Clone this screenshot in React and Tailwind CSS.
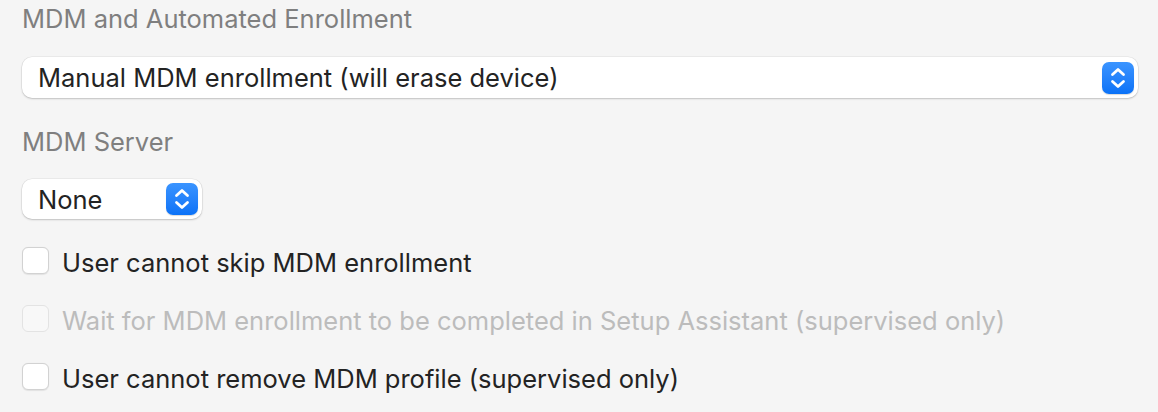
import React from "react";

function Stepper({ className = "" }) {
  return (
    <div
      className={
        "flex items-center justify-center rounded-[7px] bg-gradient-to-b from-[#3a94ff] to-[#0a72f7] shadow-[0_1px_1px_rgba(0,0,0,0.15)] " +
        className
      }
    >
      <svg width="16" height="22" viewBox="0 0 16 22" fill="none">
        <path
          d="M2.5 7.5 L8 2.5 L13.5 7.5"
          stroke="white"
          strokeWidth="2.8"
          strokeLinecap="round"
          strokeLinejoin="round"
        />
        <path
          d="M2.5 14.5 L8 19.5 L13.5 14.5"
          stroke="white"
          strokeWidth="2.8"
          strokeLinecap="round"
          strokeLinejoin="round"
        />
      </svg>
    </div>
  );
}

function Checkbox({ disabled }) {
  return (
    <div
      className={
        "h-[27px] w-[27px] shrink-0 rounded-[6px] border " +
        (disabled
          ? "border-[#e3e3e3] bg-[#f8f8f8]"
          : "border-[#d2d2d2] bg-white shadow-[0_0.5px_1px_rgba(0,0,0,0.08)]")
      }
    />
  );
}

function Row({ children, disabled, className = "" }) {
  return (
    <div className={"flex items-start gap-[13px] " + className}>
      <Checkbox disabled={disabled} />
      <span
        className={
          "h-[31px] leading-[31px] " +
          (disabled ? "text-[#bcbcbc]" : "text-[#232323]")
        }
      >
        {children}
      </span>
    </div>
  );
}

export default function App() {
  return (
    <div
      className="flex h-[412px] w-[1158px] flex-col bg-[#f5f5f5] pl-[22px] pr-[20px] text-[25.5px] tracking-normal"
      style={{ fontFamily: '"Inter", sans-serif' }}
    >
      <div className="mt-[3px] h-[31px] leading-[31px] text-[#7f7f7f]">
        MDM and Automated Enrollment
      </div>

      <div className="mt-[23px] flex h-[41px] items-center justify-between rounded-[10px] bg-white pl-[16px] pr-[4px] shadow-[0_0_0_0.5px_rgba(0,0,0,0.08),0_1px_2px_rgba(0,0,0,0.18)]">
        <span className="h-[31px] leading-[31px] text-[#232323]">
          Manual MDM enrollment (will erase device)
        </span>
        <Stepper className="h-[32px] w-[32px]" />
      </div>

      <div className="mt-[28px] h-[31px] leading-[31px] text-[#7f7f7f]">
        MDM Server
      </div>

      <div className="mt-[22px] flex h-[40px] w-[180px] items-center justify-between rounded-[10px] bg-white pl-[16px] pr-[4px] shadow-[0_0_0_0.5px_rgba(0,0,0,0.08),0_1px_2px_rgba(0,0,0,0.18)]">
        <span className="h-[31px] leading-[31px] text-[#232323]">None</span>
        <Stepper className="h-[32px] w-[32px]" />
      </div>

      <Row className="mt-[28px]">User cannot skip MDM enrollment</Row>
      <Row className="mt-[27px]" disabled>
        Wait for MDM enrollment to be completed in Setup Assistant (supervised only)
      </Row>
      <Row className="mt-[27px]">User cannot remove MDM profile (supervised only)</Row>
    </div>
  );
}
